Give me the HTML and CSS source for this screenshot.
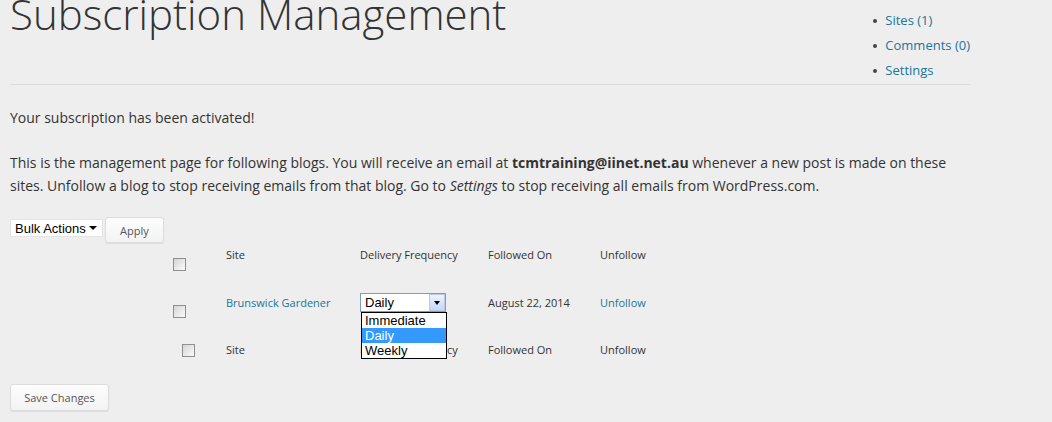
FILE: index.html
```html
<!DOCTYPE html>
<html lang="en">
<head>
    <meta charset="UTF-8">
    <meta name="viewport" content="width=device-width">
    <title>Subscription Management</title>
    <link rel="stylesheet" href="styles.css">
</head>
<body>
<div id="wrap">
    <div class="header">
        <h1 class="title">Subscription Management</h1>
        <ul class="subnav">
            <li><a href="#">Sites (1)</a></li>
            <li><a href="#">Comments (0)</a></li>
            <li><a href="#">Settings</a></li>
        </ul>
    </div>
    <p class="msg">Your subscription has been activated!</p>
    <p class="msg intro">This is the management page for following blogs. You will receive an email at <b>tcmtraining@iinet.net.au</b> whenever a new post is made on these sites. Unfollow a blog to stop receiving emails from that blog. Go to <em>Settings</em> to stop receiving all emails from WordPress.com.</p>
    <div class="bulk">
        <div class="bulk-select">
            <span>Bulk Actions</span>
            <i class="caret"></i>
        </div>
        <button class="button apply">Apply</button>
    </div>
    <div class="subs">
        <div class="row row-head">
            <div class="cell"><input type="checkbox" class="cb"></div>
            <div class="cell">Site</div>
            <div class="cell">Delivery Frequency</div>
            <div class="cell">Followed On</div>
            <div class="cell">Unfollow</div>
        </div>
        <div class="row row-site">
            <div class="cell"><input type="checkbox" class="cb"></div>
            <div class="cell"><a href="#">Brunswick Gardener</a></div>
            <div class="cell">
                <div class="freq">
                    <span>Daily</span>
                    <span class="freq-btn"><i class="caret"></i></span>
                    <ul class="freq-list">
                        <li>Immediate</li>
                        <li class="selected">Daily</li>
                        <li>Weekly</li>
                    </ul>
                </div>
            </div>
            <div class="cell">August 22, 2014</div>
            <div class="cell"><a href="#">Unfollow</a></div>
        </div>
        <div class="row row-foot">
            <div class="cell"><input type="checkbox" class="cb"></div>
            <div class="cell">Site</div>
            <div class="cell">Delivery Frequency</div>
            <div class="cell">Followed On</div>
            <div class="cell">Unfollow</div>
        </div>
    </div>
    <button class="button save">Save Changes</button>
</div>
</body>
</html>
```

FILE: styles.css
```css
*{
    margin: 0;
    padding: 0;
    box-sizing: border-box;
}
ul{
    list-style: none;
}
a{
    color: #21759b;
    text-decoration: none;
}
html,body{
    width: 100%;
    height: 100%;
    overflow: hidden;
}
body{
    background-color: #eeeeee;
    font-family: "Open Sans", "Liberation Sans", sans-serif;
    color: #333;
}
#wrap{
    width: 960px;
    margin-left: 10px;
}
.header{
    display: flex;
    align-items: flex-start;
    justify-content: space-between;
    height: 85px;
    border-bottom: 1px solid #dcdcdc;
}
.title{
    font-size: 42px;
    font-weight: 300;
    line-height: 1;
    margin-top: -7px;
    color: #333;
}
.subnav{
    margin-top: 8px;
    font-size: 13px;
    line-height: 25px;
}
.subnav li{
    display: flex;
    align-items: center;
}
.subnav li:before{
    content: '';
    width: 4px;
    height: 4px;
    border-radius: 50%;
    background-color: #444;
    margin-right: 8px;
}
.msg{
    font-size: 14px;
    line-height: 23px;
    margin-top: 21px;
}
.msg.intro{
    margin-top: 22px;
}
.bulk{
    display: flex;
    align-items: flex-start;
    margin-top: 20px;
}
.bulk-select{
    width: 93px;
    height: 18px;
    margin-top: 2px;
    margin-right: 2px;
    background-color: #fff;
    border: 1px solid #e4e4e4;
    display: flex;
    align-items: center;
    justify-content: space-between;
    padding: 0 5px 0 4px;
    font-family: "Liberation Sans", Arial, sans-serif;
    font-size: 13px;
    color: #000;
}
.caret{
    width: 0;
    height: 0;
    border-left: 4px solid transparent;
    border-right: 4px solid transparent;
    border-top: 4px solid #000;
}
.button{
    height: 26px;
    padding: 0 14px;
    background: linear-gradient(#fdfdfd, #f3f3f3);
    border: 1px solid #dcdcdc;
    border-radius: 3px;
    box-shadow: 0 1px 1px rgba(0,0,0,0.08);
    font-family: "Open Sans", "Liberation Sans", sans-serif;
    font-size: 11px;
    color: #555;
}
.subs{
    margin-top: 3px;
}
.row{
    display: grid;
    grid-template-columns: 53px 134px 128px 112px 1fr;
    padding-left: 163px;
    font-size: 11px;
    line-height: 18px;
}
.row-head{
    height: 48px;
}
.row-site{
    height: 47px;
}
.cb{
    appearance: none;
    -webkit-appearance: none;
    display: block;
    width: 13px;
    height: 13px;
    border: 1px solid #8e8f8f;
    background: linear-gradient(135deg, #d4d4d4, #fbfbfb);
}
.row-head .cb{
    margin-top: 12px;
}
.row-site .cb{
    margin-top: 11px;
}
.row-foot .cb{
    margin-top: 3px;
    margin-left: 9px;
}
.freq{
    position: relative;
    width: 86px;
    height: 19px;
    margin-top: -1px;
    background-color: #fff;
    border: 1px solid #7f9db9;
    display: flex;
    align-items: center;
    justify-content: space-between;
    padding-left: 4px;
    font-family: "Liberation Sans", Arial, sans-serif;
    font-size: 13px;
    color: #000;
}
.freq-btn{
    width: 16px;
    height: 17px;
    border: 1px solid #b9cbe6;
    background: linear-gradient(#eef3fd, #c6d6f6);
    display: flex;
    align-items: center;
    justify-content: center;
}
.freq-btn .caret{
    border-left-width: 3px;
    border-right-width: 3px;
}
.freq-list{
    position: absolute;
    left: 0;
    top: 18px;
    width: 86px;
    background-color: #fff;
    border: 1px solid #000;
    z-index: 2;
}
.freq-list li{
    line-height: 15px;
    padding-left: 3px;
}
.freq-list li.selected{
    background-color: #3399ff;
    color: #fff;
}
.save{
    height: 27px;
    width: 99px;
    padding: 0;
    margin-top: 25px;
}
```
